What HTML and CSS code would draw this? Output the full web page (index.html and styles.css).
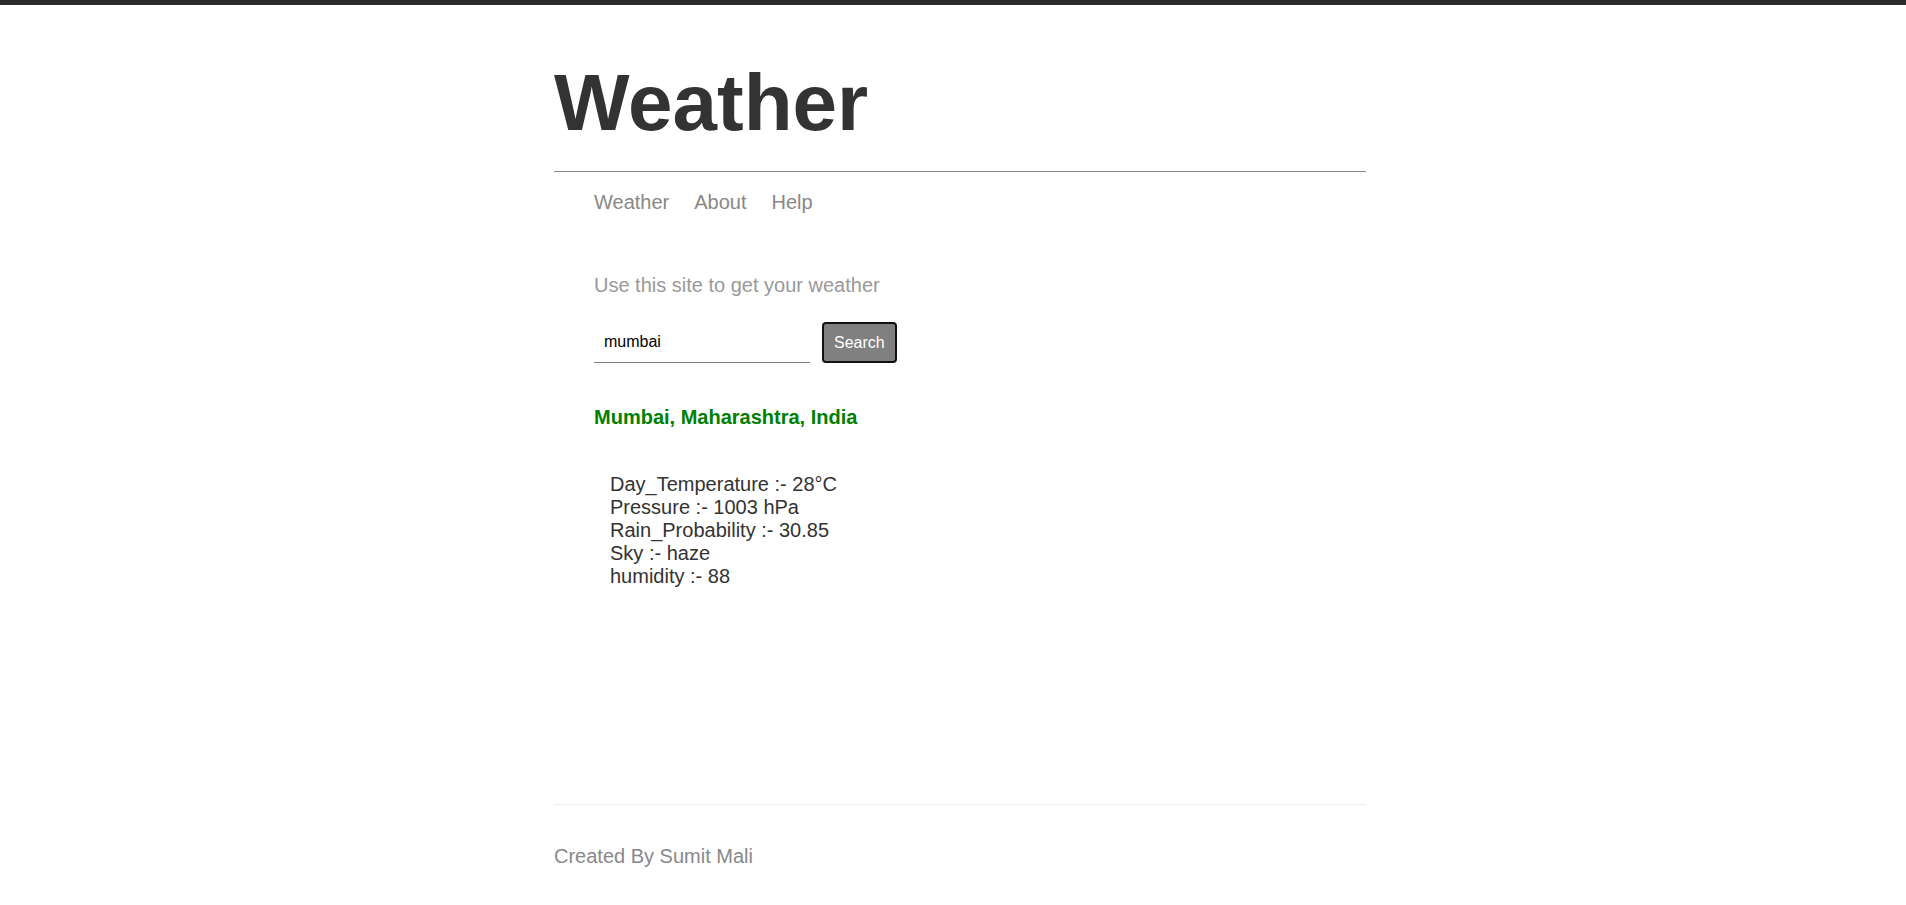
FILE: index.html
```html
<!DOCTYPE html>
<html lang="en">
<head>
<meta charset="utf-8">
<title>Weather</title>
<link rel="stylesheet" href="styles.css">
</head>
<body>
<div class="topbar"></div>
<div class="page">
  <header class="header">
    <h1 class="title">Weather</h1>
  </header>
  <main class="content">
    <nav>
      <ul class="nav">
        <li><a class="nav-link" href="#">Weather</a></li>
        <li><a class="nav-link" href="#">About</a></li>
        <li><a class="nav-link" href="#">Help</a></li>
      </ul>
    </nav>
    <p class="intro">Use this site to get your weather</p>
    <form class="search-form">
      <input class="search-input" type="text" value="mumbai">
      <button class="search-btn" type="button">Search</button>
    </form>
    <p class="location">Mumbai, Maharashtra, India</p>
    <div class="data">
      <div class="data-line">Day_Temperature :- 28°C</div>
      <div class="data-line">Pressure :- 1003 hPa</div>
      <div class="data-line">Rain_Probability :- 30.85</div>
      <div class="data-line">Sky :- haze</div>
      <div class="data-line">humidity :- 88</div>
    </div>
  </main>
  <footer class="footer">
    <p class="credit">Created By Sumit Mali</p>
  </footer>
</div>
</body>
</html>
```
FILE: styles.css
```css
html, body {
  margin: 0;
  padding: 0;
  background: #ffffff;
}

body {
  font-family: "Liberation Sans", Arial, sans-serif;
  font-size: 20px;
  line-height: 23px;
  color: #333333;
  padding-left: 14px;
}

.topbar {
  height: 5px;
  background: #2b2b2b;
  margin-left: -14px;
}

.page {
  width: 812px;
  margin: 0 auto;
}

.header {
  border-bottom: 1px solid #8a8a8a;
}

.title {
  margin: 58px 0 28px 0;
  font-size: 80px;
  line-height: 80px;
  font-weight: bold;
  color: #333333;
}

.content {
  box-sizing: border-box;
  min-height: 632px;
  padding: 19px 0 0 40px;
}

.nav {
  list-style: none;
  margin: 0;
  padding: 0;
  display: flex;
  gap: 25px;
}

.nav-link {
  color: #888888;
  text-decoration: none;
}

.intro {
  margin: 60px 0 0 0;
  color: #999999;
}

.search-form {
  margin-top: 25px;
  display: flex;
  align-items: stretch;
  gap: 12px;
  height: 41px;
}

.search-input {
  box-sizing: border-box;
  width: 216px;
  height: 41px;
  border: none;
  border-bottom: 1px solid #808080;
  padding: 0 10px;
  font-family: "Liberation Sans", Arial, sans-serif;
  font-size: 16px;
  color: #000000;
  background: transparent;
  outline: none;
}

.search-btn {
  box-sizing: border-box;
  height: 41px;
  padding: 0 10px;
  border: 2px solid #111111;
  border-radius: 4px;
  background: #808080;
  color: #ffffff;
  font-family: "Liberation Sans", Arial, sans-serif;
  font-size: 16px;
  cursor: pointer;
}

.location {
  margin: 43px 0 0 0;
  font-weight: bold;
  color: #008000;
}

.data {
  margin-top: 44px;
  padding-left: 16px;
  color: #333333;
}

.footer {
  border-top: 1px solid #eeeeee;
}

.credit {
  margin: 40px 0 0 0;
  color: #888888;
}
```
